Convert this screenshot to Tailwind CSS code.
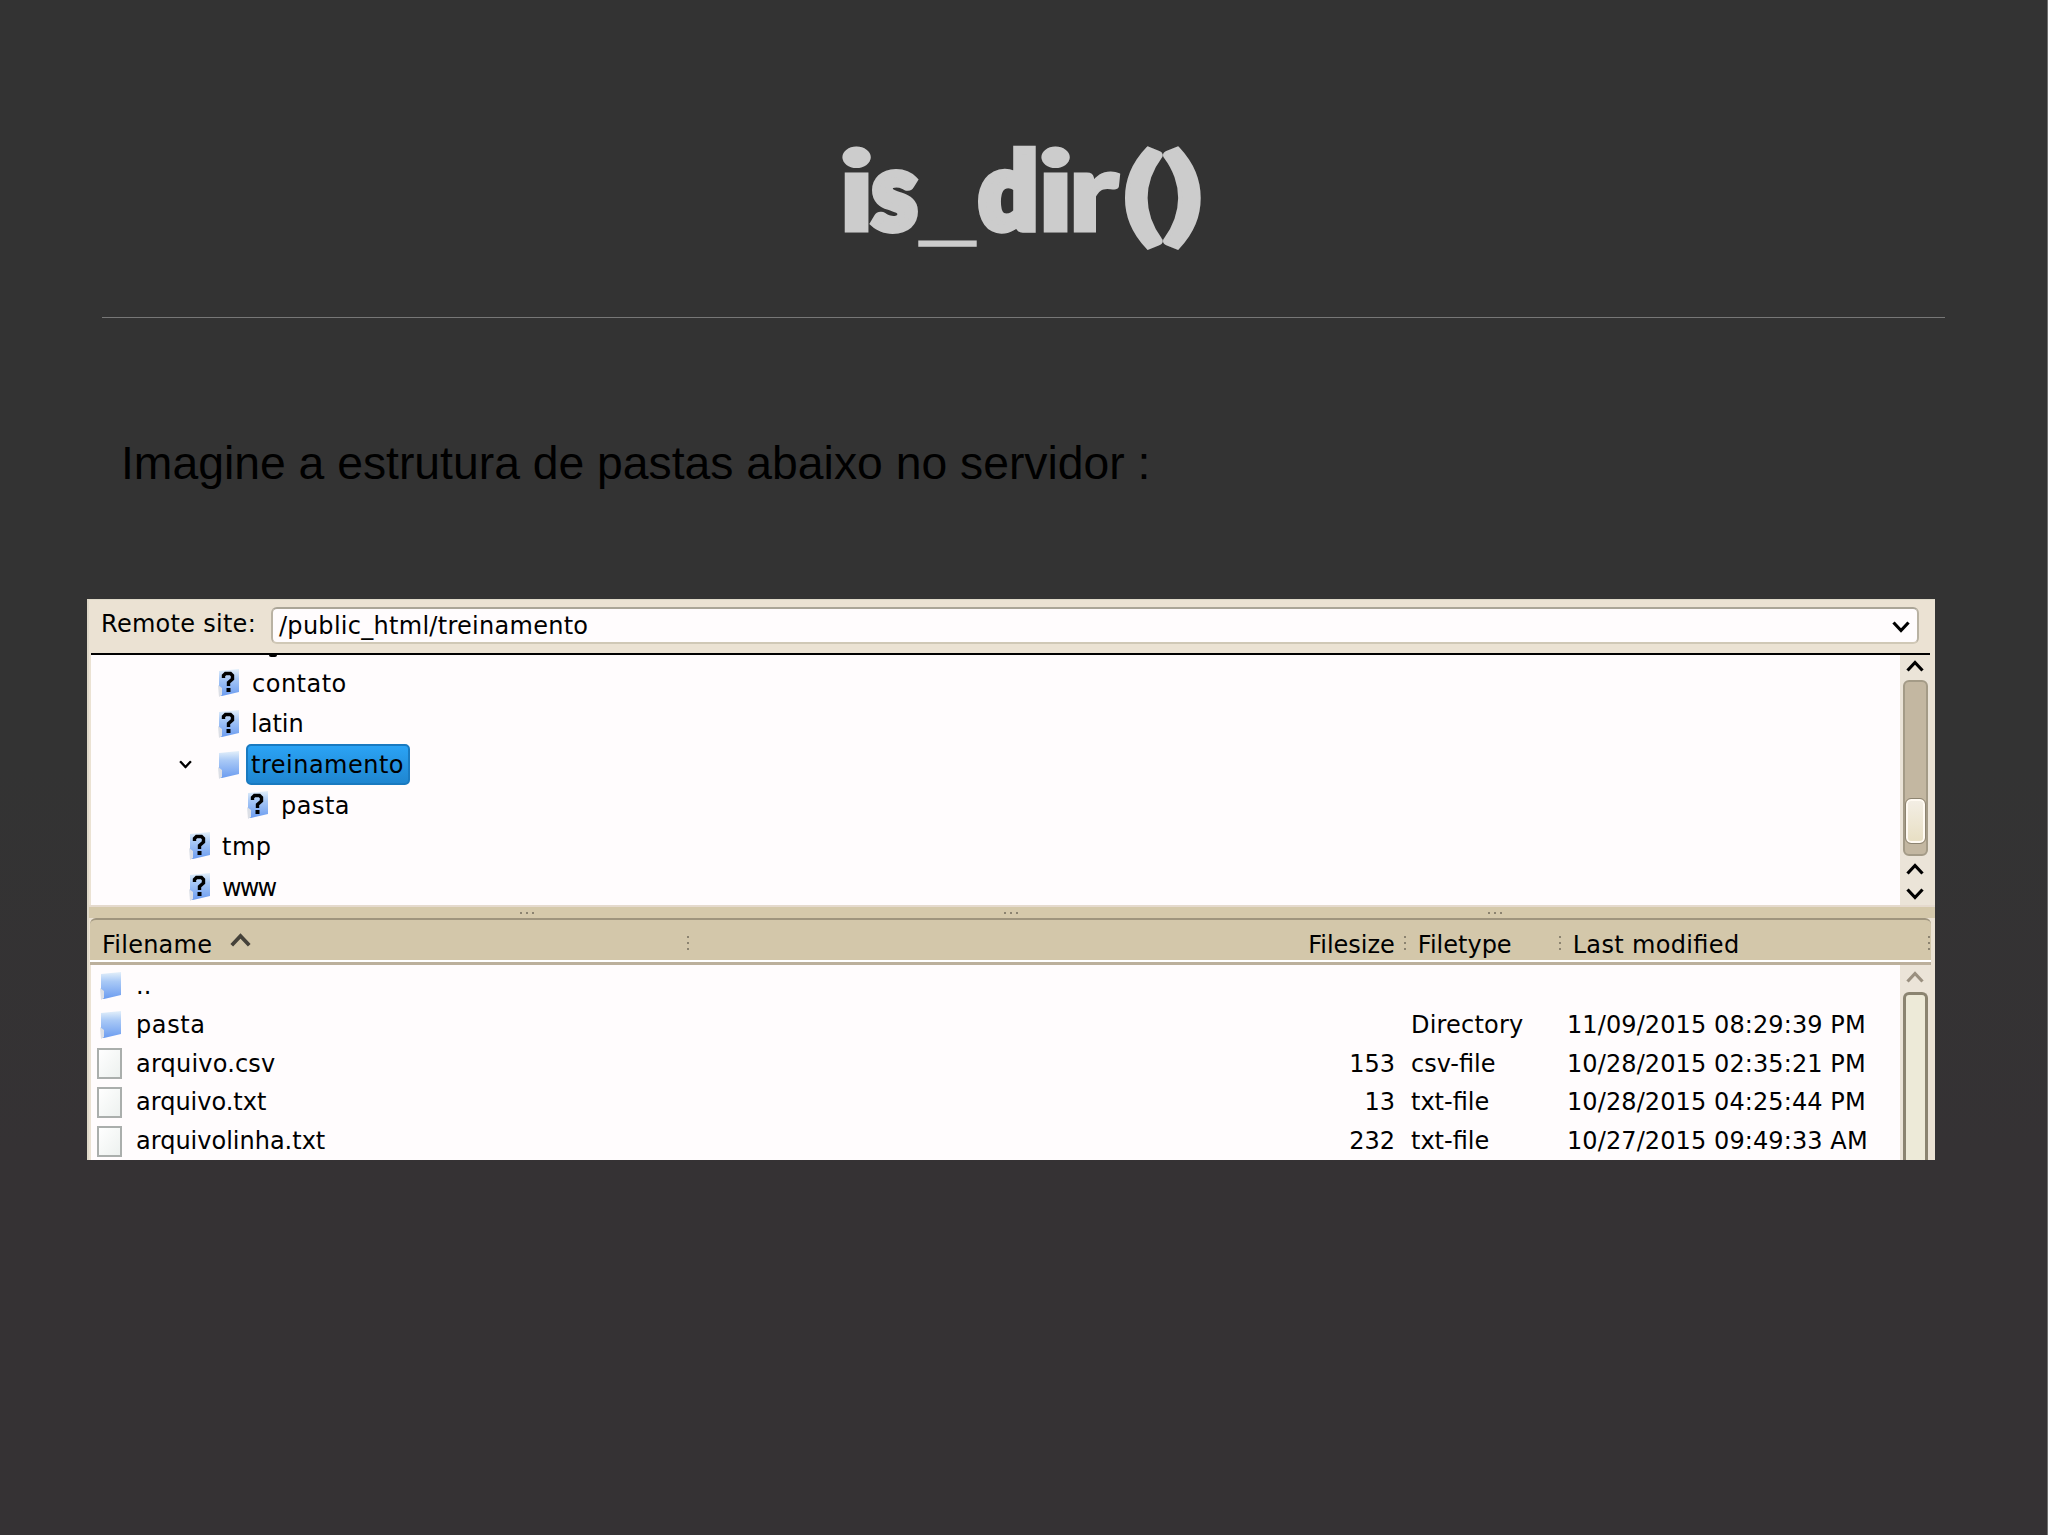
<!DOCTYPE html>
<html lang="pt-BR">
<head>
<meta charset="utf-8">
<title>is_dir()</title>
<script src="https://cdn.jsdelivr.net/npm/@tailwindcss/browser@4"></script>
</head>
<body class="w-[2048px] h-[1535px] overflow-hidden bg-linear-to-b from-[#333333] from-50% to-[#353234] to-75% border-r border-[#707070]">
<svg width="0" height="0" class="absolute">
  <defs>
    <linearGradient id="fg" x1="0" y1="0" x2="0" y2="1"><stop offset="0" stop-color="#e4f0fa"/><stop offset=".35" stop-color="#a9c9f6"/><stop offset="1" stop-color="#6c9cf0"/></linearGradient>
    <symbol id="folder" viewBox="0 0 22 30"><path d="M1 3L21 1V24L4 28L1 28Z" fill="url(#fg)"/><path d="M0 17L4 20V27L1 29Z" fill="#dcdfe6"/></symbol>
    <symbol id="unknown" viewBox="0 0 22 30"><use href="#folder"/><path d="M5.500 10V7.500L7.500 5.500H12.500L14.500 7.500V11L10.500 14.500V18" fill="none" stroke="#000" stroke-width="3.400"/><rect x="8.500" y="20" width="4" height="4"/></symbol>
    <symbol id="up" viewBox="0 0 18 12"><path d="M1.500 10.500L9 2.500L16.500 10.500" fill="none" stroke="currentColor" stroke-width="3.200"/></symbol>
    <symbol id="down" viewBox="0 0 18 12"><path d="M1.500 1.500L9 9.500L16.500 1.500" fill="none" stroke="currentColor" stroke-width="3.200"/></symbol>
  </defs>
</svg>
<header class="mx-[102px] h-[318px] pt-[122px] pl-[736px] border-b border-[#777777]">
  <h1 class="flex font-['Lato',sans-serif] font-black text-[110px] leading-[132px] text-[#cccccc] [-webkit-text-stroke:3px_#cccccc]"><span class="w-[34px] origin-[0_108px] scale-x-[1.3]">i</span><span class="w-[46px] origin-[0_108px] scale-x-[0.93] scale-y-[0.97] -translate-y-[2px] [-webkit-text-stroke:8px_#cccccc]">s</span><span class="w-[61px] origin-[0_117px] -translate-x-[3px] translate-y-[3px] scale-x-[1.26] scale-y-[0.5]">_</span><span class="w-[58px] origin-[0_108px] scale-x-[0.93] scale-y-[0.96] -translate-y-[3px] [-webkit-text-stroke:9px_#cccccc]">d</span><span class="w-[31px] origin-[0_108px] scale-x-[1.3]">i</span><span class="w-[53px] origin-[0_108px] scale-x-[1.22]">r</span><span class="w-[38px] origin-[0_108px] translate-x-[1px] scale-x-[1.4] scale-y-[0.96]">(</span><span class="w-[40px] origin-[0_108px] translate-x-[2px] scale-x-[1.4] scale-y-[0.96]">)</span></h1>
</header>
<p class="h-[281px] pt-[120px] pl-[121px] text-[46.300px] leading-[50px] font-['Liberation_Sans',sans-serif] text-black whitespace-nowrap">Imagine a estrutura de pastas abaixo no servidor :</p>
<main class="ml-[87px] w-[1848px] h-[561px] flex flex-col overflow-hidden bg-[#ebe2d3] border-l-2 border-t border-[#ded8c8] text-[24px] leading-[30px] text-black font-['DejaVu_Sans',sans-serif] whitespace-nowrap">
  <div class="h-[53px] shrink-0 flex pl-[12px] tracking-[0.280px]">
    <span class="w-[170px] pt-[9px]">Remote site:</span>
    <div class="mt-[7px] w-[1648px] h-[37px] flex justify-between rounded-md border-2 border-t-[#aaa597] border-x-[#b9b2a3] border-b-[#d0c8b6] bg-[#fffcfd] pl-[6px] pr-[7px]">
      <span class="pt-[2px]">/public_html/treinamento</span>
      <svg class="mt-[12px] w-[18px] h-[12px]"><use href="#down"/></svg>
    </div>
  </div>
  <div class="h-[252px] shrink-0 flex border-t-2 border-black mr-[5px] ml-[2px] bg-[#fffcfd]">
    <div class="w-[1809px] relative overflow-hidden">
      <i class="absolute left-[178px] top-0 w-[8px] h-[2px] rounded-b bg-black"></i>
      <ul class="pt-[8px] tracking-[0.500px]">
        <li class="h-[40.700px] flex items-center pl-[127px]"><svg class="w-[22px] h-[30px]"><use href="#unknown"/></svg><span class="pl-[12px] pt-[1px]">contato</span></li>
        <li class="h-[40.700px] flex items-center pl-[127px]"><svg class="w-[22px] h-[30px]"><use href="#unknown"/></svg><span class="pl-[11px] tracking-normal">latin</span></li>
        <li class="h-[40.700px] flex items-center pl-[88px]"><svg class="w-[13px] h-[9px]" viewBox="0 0 18 12"><use href="#down"/></svg><svg class="ml-[26px] w-[22px] h-[30px]"><use href="#folder"/></svg><span class="ml-[6px] h-[41px] w-[164px] pl-[3px] pt-[4px] rounded-[5px] border-2 border-[#1a7ac0] bg-linear-to-b from-[#2ba3f5] to-[#1f86d0]">treinamento</span></li>
        <li class="h-[40.700px] flex items-center pl-[156px]"><svg class="w-[22px] h-[30px]"><use href="#unknown"/></svg><span class="pl-[12px] pt-[1px]">pasta</span></li>
        <li class="h-[40.700px] flex items-center pl-[98px]"><svg class="w-[22px] h-[30px]"><use href="#unknown"/></svg><span class="pl-[11px] pt-[1px]">tmp</span></li>
        <li class="h-[40.700px] flex items-center pl-[98px]"><svg class="w-[22px] h-[30px]"><use href="#unknown"/></svg><span class="pl-[11px] pt-[2px] tracking-[-1.900px]">www</span></li>
      </ul>
    </div>
    <div class="flex-1 flex flex-col items-center bg-[#ebe4d8]">
      <svg class="mt-[5px] w-[18px] h-[12px]"><use href="#up"/></svg>
      <div class="mt-[8px] w-[25px] h-[176px] rounded-md border-2 border-[#a49b87] bg-[#c3b7a1] pt-[117px] px-[1px]"><div class="h-[44px] rounded-[5px] border-2 border-[#fffaf2] outline-1 outline-[#8d8471] bg-linear-to-b from-[#f3eee4] to-[#e8dfc4]"></div></div>
      <svg class="mt-[7px] w-[18px] h-[12px]"><use href="#up"/></svg>
      <svg class="mt-[13px] w-[18px] h-[12px]"><use href="#down"/></svg>
    </div>
  </div>
  <div class="h-[13px] shrink-0 flex gap-[468px] border-t-2 border-[#e5dace] bg-[#d5c9ab] text-[#8b8370] pl-[430px]">
    <svg class="w-[16px] h-[12px]" fill="currentColor"><path d="M1 5h2v2h-2zM7 5h2v2h-2zM13 5h2v2h-2z"/></svg>
    <svg class="w-[16px] h-[12px]" fill="currentColor"><path d="M1 5h2v2h-2zM7 5h2v2h-2zM13 5h2v2h-2z"/></svg>
    <svg class="w-[16px] h-[12px]" fill="currentColor"><path d="M1 5h2v2h-2zM7 5h2v2h-2zM13 5h2v2h-2z"/></svg>
  </div>
  <div class="h-[47px] shrink-0 mr-[4px] ml-[1px] rounded-t-md border-t-2 border-[#9f957e] bg-[#d3c7aa] flex shadow-[inset_0_-3px_0_#bcb09c,inset_0_-5px_0_#fff] tracking-[0.250px]">
    <div class="w-[597px] pl-[12px] pt-[10px] flex"><span>Filename</span><svg class="ml-[18px] mt-[3px] w-[21px] h-[14px] text-[#45423a]" viewBox="0 0 18 12"><use href="#up"/></svg></div>
    <svg class="w-[4px] h-[20px] mt-[15px]" fill="#8b8370"><path d="M1 1h2v2h-2zM1 7h2v2h-2zM1 13h2v2h-2z"/></svg>
    <span class="w-[706px] pt-[10px] text-right tracking-normal">Filesize</span>
    <svg class="ml-[8px] w-[4px] h-[20px] mt-[15px]" fill="#8b8370"><path d="M1 1h2v2h-2zM1 7h2v2h-2zM1 13h2v2h-2z"/></svg>
    <span class="w-[151px] pl-[11px] pt-[10px] tracking-normal">Filetype</span>
    <svg class="w-[4px] h-[20px] mt-[15px]" fill="#8b8370"><path d="M1 1h2v2h-2zM1 7h2v2h-2zM1 13h2v2h-2z"/></svg>
    <span class="w-[366px] pl-[11px] pt-[10px] tracking-[0.350px]">Last modi&#64257;ed</span>
    <svg class="w-[4px] h-[20px] mt-[15px]" fill="#8b8370"><path d="M1 1h2v2h-2zM1 7h2v2h-2zM1 13h2v2h-2z"/></svg>
  </div>
  <div class="flex-1 min-h-0 flex mr-[5px] ml-[2px] bg-[#fffcfd]">
    <div class="w-[1809px] pt-[2px]">
      <div class="h-[38.700px] flex items-center pl-[9px]"><svg class="w-[22px] h-[30px]"><use href="#folder"/></svg><span class="pl-[14px]">..</span></div>
      <div class="h-[38.700px] flex items-center pl-[9px]"><svg class="w-[22px] h-[30px]"><use href="#folder"/></svg><span class="pl-[14px] w-[1289px] tracking-[0.600px]">pasta</span><span class="w-[156px] tracking-[0.200px]">Directory</span><span class="tracking-[0.100px]">11/09/2015 08:29:39 PM</span></div>
      <div class="h-[38.700px] flex items-center pl-[6px]"><i class="w-[25px] h-[31px] border-2 border-[#aaaeac] bg-linear-to-br from-white to-[#edf1ef]"></i><span class="pl-[14px] w-[1109px] tracking-[0.200px]">arquivo.csv</span><span class="w-[164px] text-right">153</span><span class="w-[172px] pl-[16px]">csv-file</span><span class="tracking-[0.100px]">10/28/2015 02:35:21 PM</span></div>
      <div class="h-[38.700px] flex items-center pl-[6px]"><i class="w-[25px] h-[31px] border-2 border-[#aaaeac] bg-linear-to-br from-white to-[#edf1ef]"></i><span class="pl-[14px] w-[1109px]">arquivo.txt</span><span class="w-[164px] text-right">13</span><span class="w-[172px] pl-[16px]">txt-file</span><span class="tracking-[0.100px]">10/28/2015 04:25:44 PM</span></div>
      <div class="h-[38.700px] flex items-center pl-[6px]"><i class="w-[25px] h-[31px] border-2 border-[#aaaeac] bg-linear-to-br from-white to-[#edf1ef]"></i><span class="pl-[14px] w-[1109px]">arquivolinha.txt</span><span class="w-[164px] text-right">232</span><span class="w-[172px] pl-[16px]">txt-file</span><span class="tracking-[0.100px]">10/27/2015 09:49:33 AM</span></div>
    </div>
    <div class="flex-1 flex flex-col items-center bg-[#ebe4d8]">
      <svg class="mt-[6px] w-[18px] h-[12px] text-[#9a9080]"><use href="#up"/></svg>
      <div class="mt-[9px] w-[25px] flex-1 rounded-t-md border-[3px] border-b-0 border-[#8b8471] bg-[#edead8]"></div>
    </div>
  </div>
</main>
</body>
</html>
